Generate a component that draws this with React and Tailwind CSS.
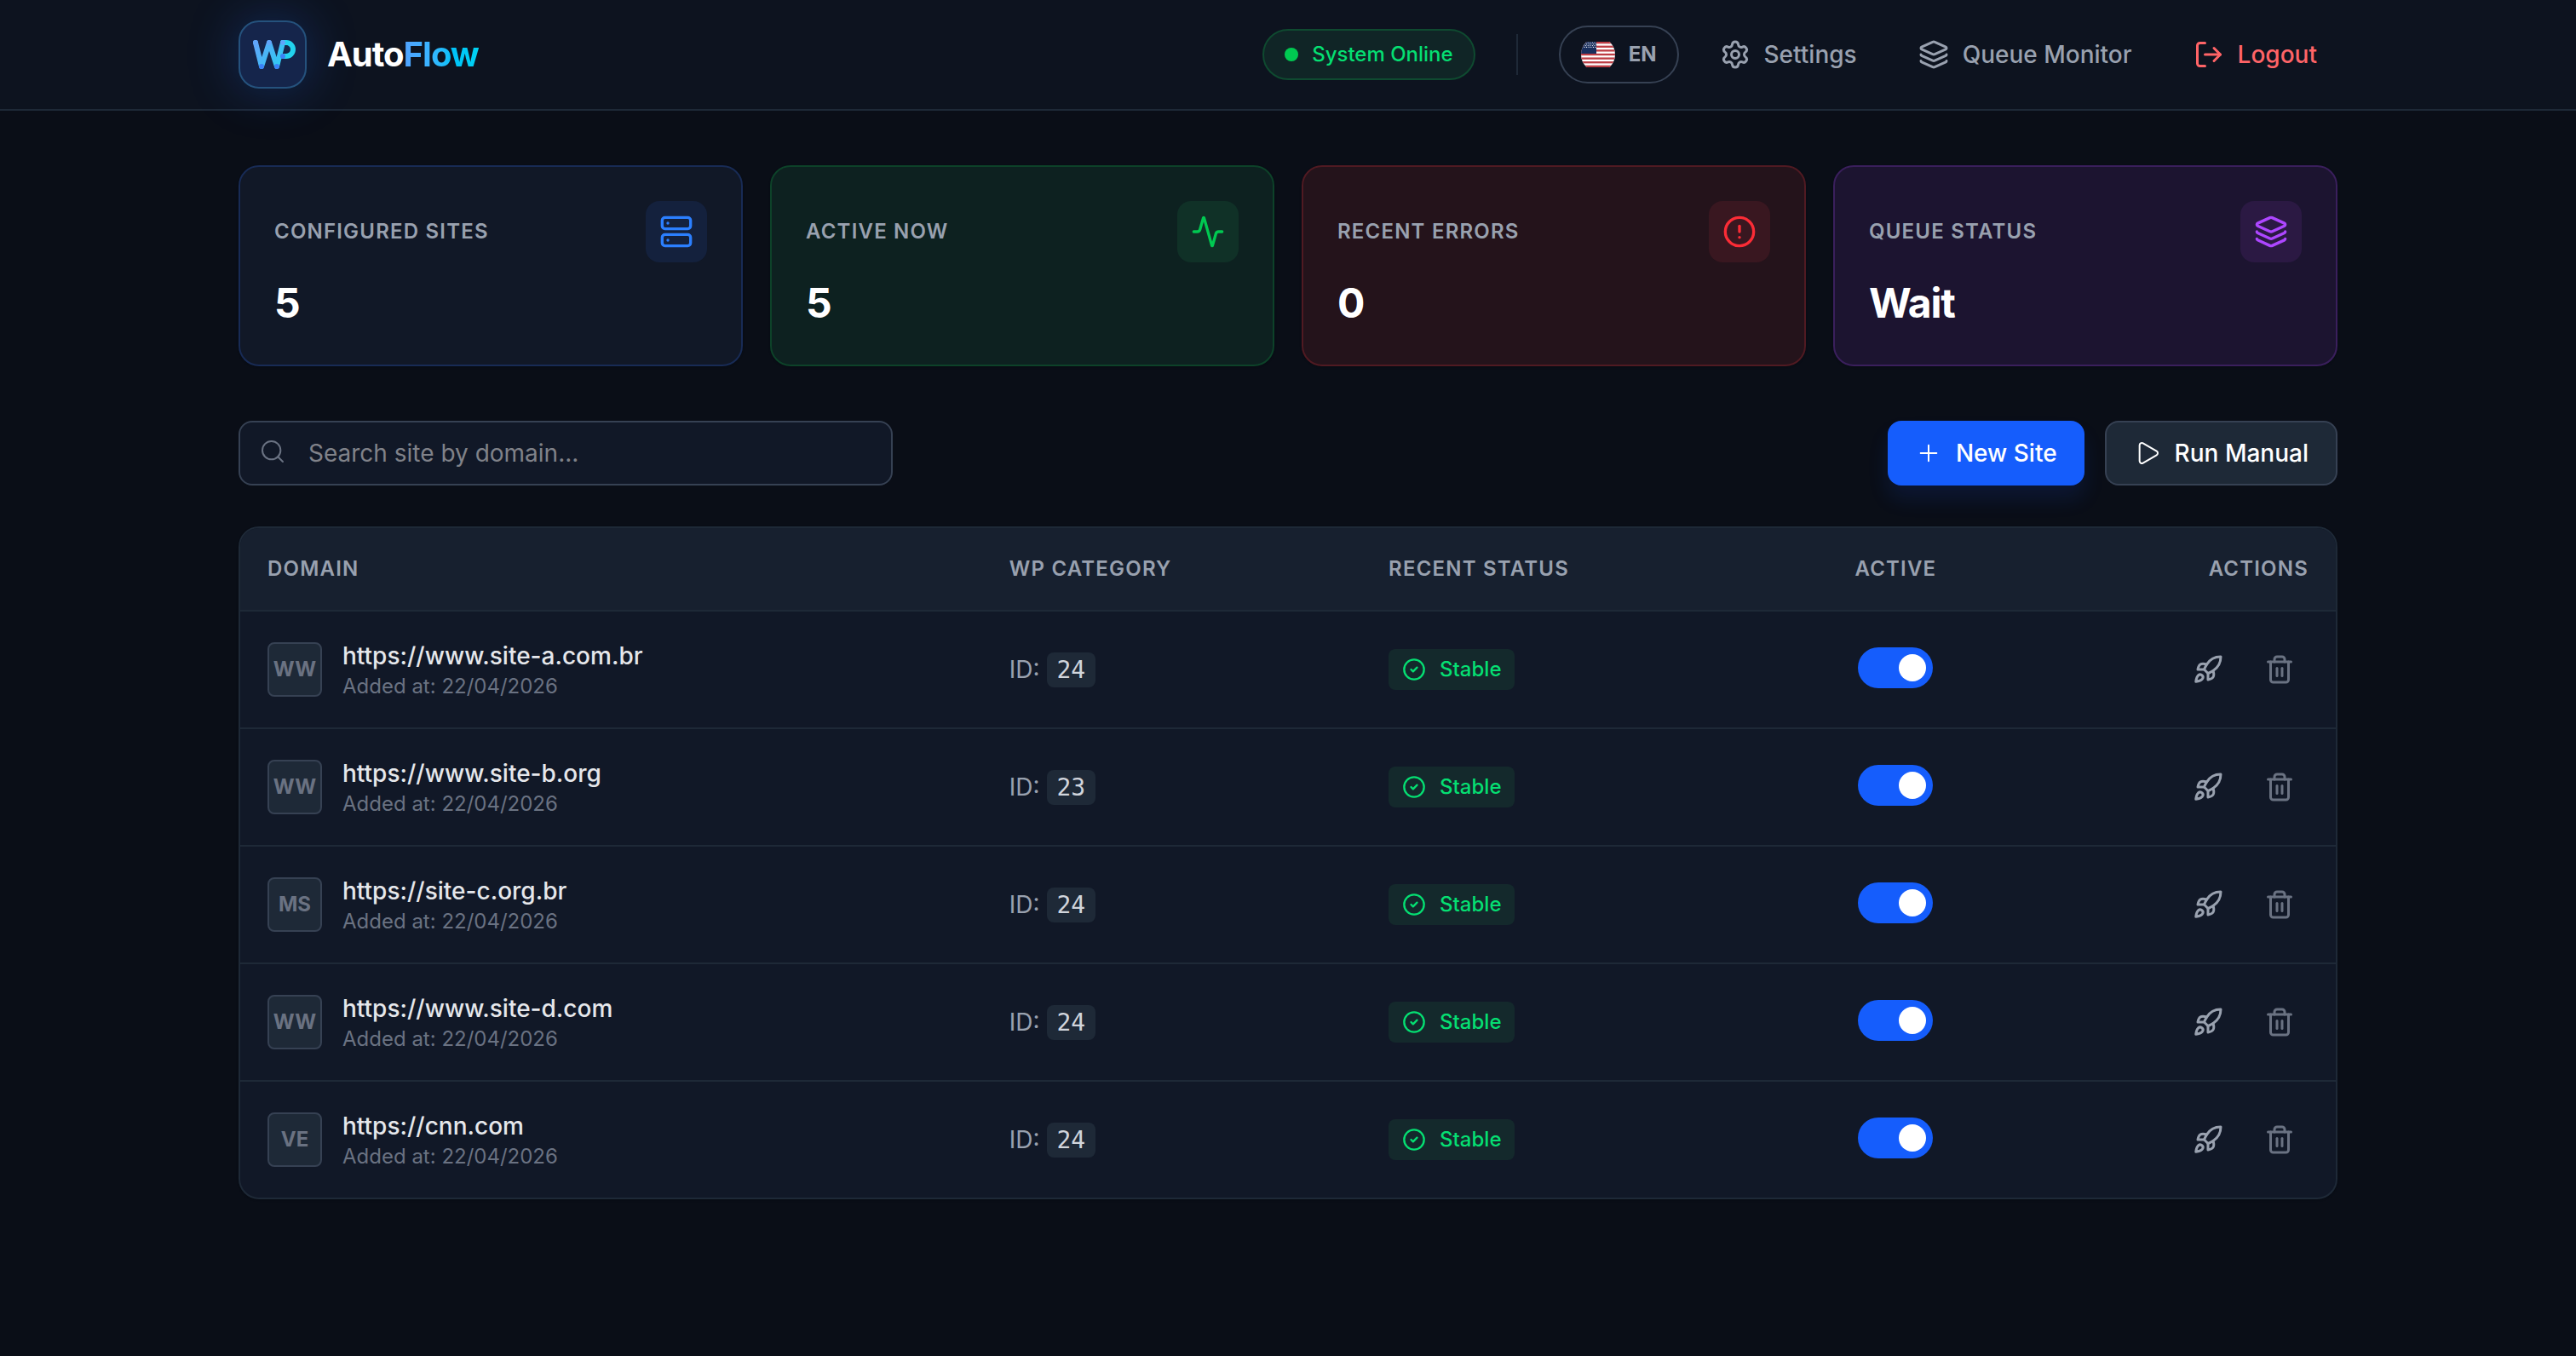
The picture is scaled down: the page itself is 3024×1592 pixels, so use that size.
import { useState } from "react";
import {
  Activity,
  CircleAlert,
  CircleCheck,
  Layers,
  LogOut,
  Play,
  Plus,
  Rocket,
  Search,
  Server,
  Settings,
  Trash2,
} from "lucide-react";

const initialSites = [
  { id: 1, initials: "WW", domain: "https://www.site-a.com.br", category: 24, active: true },
  { id: 2, initials: "WW", domain: "https://www.site-b.org", category: 23, active: true },
  { id: 3, initials: "MS", domain: "https://site-c.org.br", category: 24, active: true },
  { id: 4, initials: "WW", domain: "https://www.site-d.com", category: 24, active: true },
  { id: 5, initials: "VE", domain: "https://cnn.com", category: 24, active: true },
];

export default function App() {
  const [sites, setSites] = useState(initialSites);
  const [query, setQuery] = useState("");

  const visibleSites = sites.filter((site) =>
    site.domain.toLowerCase().includes(query.toLowerCase())
  );

  const toggleSite = (id) => {
    setSites(
      sites.map((site) =>
        site.id === id ? { ...site, active: !site.active } : site
      )
    );
  };

  const removeSite = (id) => {
    setSites(sites.filter((site) => site.id !== id));
  };

  return (
    <div className="min-h-screen bg-[#0a0e17] font-['Inter',sans-serif] text-gray-200">
      <Header />

      <main className="mx-auto max-w-[2560px] px-12 py-16">
        <div className="grid grid-cols-4 gap-8">
          <StatCard
            title="Configured Sites"
            value={sites.length}
            icon={<Server size={40} />}
            cardClass="border-[#182b55] bg-[#111827]"
            iconClass="bg-[#14213d] text-blue-500"
          />
          <StatCard
            title="Active Now"
            value={sites.filter((site) => site.active).length}
            icon={<Activity size={40} />}
            cardClass="border-[#0d4229] bg-[#0d2120]"
            iconClass="bg-[#103127] text-green-500"
          />
          <StatCard
            title="Recent Errors"
            value={0}
            icon={<CircleAlert size={40} />}
            cardClass="border-[#501a22] bg-[#24131b]"
            iconClass="bg-[#391720] text-red-500"
          />
          <StatCard
            title="Queue Status"
            value="Wait"
            icon={<Layers size={40} />}
            cardClass="border-[#3a1f5c] bg-[#1c1430]"
            iconClass="bg-[#2b1943] text-purple-500"
          />
        </div>

        <div className="mt-16 flex items-stretch justify-between">
          <div className="relative w-full max-w-3xl">
            <Search
              size={32}
              strokeWidth={1.5}
              className="absolute top-5 left-6 text-gray-500"
            />
            <input
              type="text"
              aria-label="Search site by domain"
              value={query}
              onChange={(e) => setQuery(e.target.value)}
              placeholder="Search site by domain..."
              className="w-full rounded-2xl border-2 border-gray-700 bg-[#111827] py-4 pr-8 pl-20 text-[28px] leading-10 text-white outline-none placeholder:text-[#808289]"
            />
          </div>

          <div className="flex gap-6">
            <button className="flex items-center gap-4 rounded-2xl bg-[#155dfc] px-8 text-[28px] leading-10 font-medium text-white shadow-[0_16px_24px_rgba(21,93,252,0.12)]">
              <Plus size={32} strokeWidth={1.5} />
              New Site
            </button>
            <button className="flex items-center gap-4 rounded-2xl border-2 border-gray-700 bg-[#1e2937] px-8 text-[28px] leading-10 font-medium text-white">
              <Play size={32} strokeWidth={1.5} />
              Run Manual
            </button>
          </div>
        </div>

        <div className="mt-12 overflow-hidden rounded-3xl border-2 border-[#1e2937] bg-[#111827] shadow-sm">
          <table className="w-full table-fixed text-left">
            <thead>
              <tr className="border-b-2 border-[#1e2937] bg-[#17202f] text-2xl leading-8 tracking-wider text-gray-400 uppercase">
                <th className="w-[35.4%] px-8 py-8 font-semibold">Domain</th>
                <th className="w-[18.1%] px-8 py-8 font-semibold">WP Category</th>
                <th className="w-[19.1%] px-8 py-8 font-semibold">Recent Status</th>
                <th className="w-[12.8%] px-8 py-8 text-center font-semibold">Active</th>
                <th className="px-8 py-8 text-right font-semibold">Actions</th>
              </tr>
            </thead>
            <tbody>
              {visibleSites.map((site) => (
                <SiteRow
                  key={site.id}
                  site={site}
                  onToggle={() => toggleSite(site.id)}
                  onRemove={() => removeSite(site.id)}
                />
              ))}
            </tbody>
          </table>
        </div>
      </main>
    </div>
  );
}

function Header() {
  return (
    <header className="border-b-2 border-[#1e2937] bg-[#0d131f]">
      <div className="mx-auto flex h-32 max-w-[2560px] items-center justify-between px-12">
        <div className="flex items-center gap-6">
          <Logo />
          <span className="text-[40px] leading-[56px] font-bold tracking-tight text-white">
            Auto
            <span className="bg-linear-to-r from-blue-400 to-cyan-400 bg-clip-text text-transparent">
              Flow
            </span>
          </span>
        </div>

        <div className="flex items-center gap-6">
          <div className="flex items-center gap-4 rounded-full border-2 border-[#0f4a30] bg-[#102526] px-6 py-3 text-2xl leading-8 font-medium text-green-400">
            <span className="size-4 rounded-full bg-green-500" />
            System Online
          </div>

          <div className="mx-6 h-12 w-0.5 bg-[#1e2937]" />

          <button className="flex items-center gap-4 rounded-full border-2 border-gray-700 px-6 py-3 text-2xl leading-10 font-bold text-gray-400">
            <Flag />
            EN
          </button>

          <NavLink icon={<Settings size={36} />} label="Settings" />
          <NavLink icon={<Layers size={36} />} label="Queue Monitor" />
          <button className="flex items-center gap-4 px-6 text-[28px] leading-10 font-medium text-[#ff6467]">
            <LogOut size={36} />
            Logout
          </button>
        </div>
      </div>
    </header>
  );
}

function NavLink({ icon, label }) {
  return (
    <a
      href="#"
      className="flex items-center gap-4 px-6 text-[28px] leading-10 font-medium text-gray-400"
    >
      {icon}
      {label}
    </a>
  );
}

function Logo() {
  return (
    <div className="size-20 rounded-3xl border-2 border-[#25527d] bg-[#15254b] shadow-[0_0_60px_rgba(37,99,235,0.3)]">
      <svg viewBox="2 2 76 76" className="size-full" fill="none">
        <defs>
          <linearGradient id="wp" x1="20" y1="26" x2="60" y2="54" gradientUnits="userSpaceOnUse">
            <stop offset="0" stopColor="#60a5fa" />
            <stop offset="1" stopColor="#22d3ee" />
          </linearGradient>
        </defs>
        <g strokeWidth="6" strokeLinecap="round" strokeLinejoin="round">
          <path d="M20 26L27 54L36 26L45 54L52 26" stroke="url(#wp)" />
          <path d="M52 26H56A8 8 0 0 1 56 42H52" stroke="#22d3ee" />
        </g>
        <g fill="#60a5fa">
          <circle cx="20" cy="26" r="3" />
          <circle cx="36" cy="26" r="3" />
          <circle cx="52" cy="26" r="3" />
        </g>
        <g fill="#3b82f6">
          <circle cx="27" cy="54" r="3" />
          <circle cx="45" cy="54" r="3" />
          <circle cx="52" cy="42" r="3" />
        </g>
      </svg>
    </div>
  );
}

function Flag() {
  return (
    <svg viewBox="0 0 40 40" className="size-10" aria-hidden="true">
      <clipPath id="flag">
        <circle cx="20" cy="20" r="20" />
      </clipPath>
      <g clipPath="url(#flag)">
        <rect y="5" width="40" height="30" fill="#fff" />
        {[0, 2, 4, 6, 8, 10, 12].map((i) => (
          <rect key={i} y={5 + (i * 30) / 13} width="40" height={30 / 13} fill="#bd3d44" />
        ))}
        <rect y="5" width="18" height="14" fill="#192f5d" />
        {/* staggered rows of stars in the upper part of the canton */}
        {[0, 1, 2, 3].map((row) =>
          [0, 1, 2, 3, 4, 5].map((col) => (
            <circle
              key={`${row}-${col}`}
              cx={3 + (row % 2) + col * 2.6}
              cy={6 + row * 1.8}
              r="0.6"
              fill="#fff"
            />
          ))
        )}
      </g>
    </svg>
  );
}

function StatCard({ title, value, icon, cardClass, iconClass }) {
  return (
    <div className={`rounded-3xl border-2 p-10 shadow-sm ${cardClass}`}>
      <div className="flex items-center justify-between">
        <h3 className="text-2xl leading-8 font-semibold tracking-wider text-gray-400 uppercase">
          {title}
        </h3>
        <div className={`rounded-2xl p-4 ${iconClass}`}>{icon}</div>
      </div>
      <p className="mt-4 text-5xl leading-[64px] font-bold tracking-tight text-white">
        {value}
      </p>
    </div>
  );
}

function SiteRow({ site, onToggle, onRemove }) {
  return (
    <tr className="border-b-2 border-[#1e2937] last:border-b-0">
      <td className="p-8">
        <div className="flex items-center gap-6">
          <div className="flex size-16 items-center justify-center rounded-lg border-2 border-gray-700 bg-[#1e2937] text-2xl leading-8 font-bold text-gray-500">
            {site.initials}
          </div>
          <div>
            <p className="text-[28px] leading-10 font-medium text-gray-200">
              {site.domain}
            </p>
            <p className="text-2xl leading-8 text-gray-500">
              Added at: 22/04/2026
            </p>
          </div>
        </div>
      </td>
      <td className="px-8 text-[28px] leading-10 text-gray-400">
        ID:{" "}
        <span className="rounded-lg bg-[#1e2937] px-3 py-1 font-['DejaVu_Sans_Mono',monospace] text-gray-300">
          {site.category}
        </span>
      </td>
      <td className="px-8">
        <div className="flex w-fit items-center gap-4 rounded-lg bg-[#14292c] px-4 py-2 text-2xl leading-8 font-medium text-green-400">
          <CircleCheck size={28} />
          Stable
        </div>
      </td>
      <td className="px-8 pb-1 text-center">
        <label className="inline-flex cursor-pointer align-middle">
          <input
            type="checkbox"
            aria-label={`Toggle ${site.domain}`}
            checked={site.active}
            onChange={onToggle}
            className="peer sr-only"
          />
          <span className="flex h-12 w-[88px] items-center rounded-full bg-gray-700 px-2 peer-checked:justify-end peer-checked:bg-[#155dfc]">
            <span className="size-8 rounded-full bg-white" />
          </span>
        </label>
      </td>
      <td className="px-8">
        <div className="flex justify-end gap-4">
          <button aria-label="Run now" className="p-4 text-gray-400">
            <Rocket size={36} />
          </button>
          <button aria-label="Delete site" onClick={onRemove} className="p-4 text-gray-500">
            <Trash2 size={36} />
          </button>
        </div>
      </td>
    </tr>
  );
}
